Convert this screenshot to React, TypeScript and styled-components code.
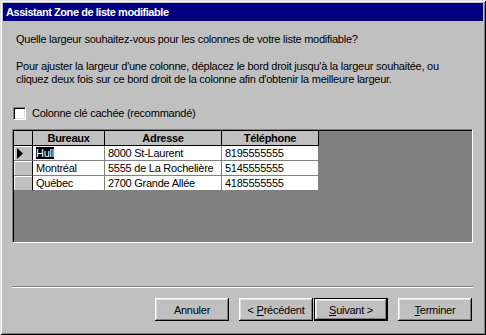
import React from 'react'
import styled, { createGlobalStyle } from 'styled-components'

const GlobalStyle = createGlobalStyle`
  html, body {
    margin: 0;
    padding: 0;
    background: #c0c0c0;
  }
  body {
    font-family: 'Liberation Sans', Arial, sans-serif;
    font-size: 11px;
    letter-spacing: -0.25px;
    color: #000;
  }
`

const Window = styled.div`
  width: 486px;
  height: 335px;
  box-sizing: border-box;
  padding: 3px;
  background: #c0c0c0;
  box-shadow: inset 1px 1px #dfdfdf, inset -1px -1px #000,
    inset 2px 2px #fff, inset -2px -2px #808080;
  display: flex;
  flex-direction: column;
`

const TitleBar = styled.div`
  height: 18px;
  line-height: 18px;
  background: #000080;
  color: #fff;
  font-weight: bold;
  font-size: 11px;
  letter-spacing: -0.45px;
  padding-left: 3px;
  white-space: nowrap;
`

const Body = styled.div`
  padding: 0 10px 0 9px;
  display: flex;
  flex-direction: column;
`

const Text = styled.p<{ $top: number }>`
  margin: ${(p) => p.$top}px 0 0 4px;
  line-height: 13px;
  white-space: nowrap;
`

const CheckRow = styled.label`
  margin: 21px 0 0 1px;
  display: flex;
  align-items: center;
  gap: 6px;
  height: 13px;
  line-height: 13px;
`

const CheckBox = styled.span`
  width: 13px;
  height: 13px;
  box-sizing: border-box;
  background: #fff;
  border: 1px solid;
  border-color: #808080 #fff #fff #808080;
  box-shadow: inset 1px 1px #000, inset -1px -1px #dfdfdf;
`

const GridBox = styled.div`
  margin-top: 9px;
  height: 114px;
  box-sizing: border-box;
  border: 1px solid;
  border-color: #808080 #fff #fff #808080;
  background: #808080;
  padding: 1px 0 0 1px;
  box-shadow: inset 1px 1px #000;
`

const Table = styled.table`
  border-collapse: separate;
  border-spacing: 0;
  table-layout: fixed;
  width: 305px;
`

const HeadCell = styled.th<{ $w: number }>`
  width: ${(p) => p.$w}px;
  height: 15px;
  box-sizing: border-box;
  padding: 0;
  background: #c0c0c0;
  border-right: 1px solid #000;
  border-bottom: 1px solid #000;
  font-weight: bold;
  letter-spacing: -0.3px;
  text-align: center;
  line-height: 14px;
  white-space: nowrap;
  overflow: hidden;
`

const SelectorCell = styled.td`
  height: 15px;
  box-sizing: border-box;
  padding: 0;
  background: #c0c0c0;
  border-right: 1px solid #000;
  border-bottom: 1px solid #808080;
  box-shadow: inset 1px 1px #fff;
  vertical-align: middle;
`

const Cell = styled.td`
  height: 15px;
  box-sizing: border-box;
  padding: 0 0 0 3px;
  background: #fff;
  border-right: 1px solid #808080;
  border-bottom: 1px solid #808080;
  line-height: 14px;
  white-space: nowrap;
  overflow: hidden;
`

const Selected = styled.span`
  background: #000;
  color: #fff;
`

const Arrow = styled.svg`
  display: block;
  margin-left: 3px;
`

const Separator = styled.div`
  margin-top: 43px;
  border-top: 1px solid #808080;
  border-bottom: 1px solid #fff;
`

const ButtonRow = styled.div`
  margin-top: 10px;
  display: flex;
  justify-content: flex-end;
  padding-right: 1px;
`

const Button = styled.button<{ $default?: boolean; $gap: number }>`
  width: 74px;
  height: 23px;
  margin-left: ${(p) => p.$gap}px;
  padding: 0;
  font-family: 'Liberation Sans', Arial, sans-serif;
  font-size: 11px;
  letter-spacing: -0.25px;
  color: #000;
  background: #c0c0c0;
  border: ${(p) => (p.$default ? '1px solid #000' : 'none')};
  box-shadow: inset -1px -1px #000, inset 1px 1px #fff,
    inset -2px -2px #808080, inset 2px 2px #dfdfdf;
`

const Key = styled.u`
  text-underline-offset: 1px;
`

const rows = [
  { office: 'Hull', address: '8000 St-Laurent', phone: '8195555555', current: true },
  { office: 'Montréal', address: '5555 de La Rochelière', phone: '5145555555' },
  { office: 'Québec', address: '2700 Grande Allée', phone: '4185555555' },
]

const App = () => (
  <>
    <GlobalStyle />
    <Window>
      <TitleBar>Assistant Zone de liste modifiable</TitleBar>
      <Body>
        <Text $top={12}>
          Quelle largeur souhaitez-vous pour les colonnes de votre liste modifiable?
        </Text>
        <Text $top={14}>
          Pour ajuster la largeur d'une colonne, déplacez le bord droit jusqu'à la largeur souhaitée, ou
          <br />
          cliquez deux fois sur ce bord droit de la colonne afin d'obtenir la meilleure largeur.
        </Text>
        <CheckRow>
          <CheckBox />
          Colonne clé cachée (recommandé)
        </CheckRow>
        <GridBox>
          <Table>
            <thead>
              <tr>
                <HeadCell $w={19} />
                <HeadCell $w={72}>Bureaux</HeadCell>
                <HeadCell $w={117}>Adresse</HeadCell>
                <HeadCell $w={97}>Téléphone</HeadCell>
              </tr>
            </thead>
            <tbody>
              {rows.map((r) => (
                <tr key={r.office}>
                  <SelectorCell>
                    {r.current && (
                      <Arrow width="7" height="11" viewBox="0 0 7 11">
                        <path d="M0 0 L6 5.5 L0 11 Z" fill="#000" />
                      </Arrow>
                    )}
                  </SelectorCell>
                  <Cell>{r.current ? <Selected>{r.office}</Selected> : r.office}</Cell>
                  <Cell>{r.address}</Cell>
                  <Cell>{r.phone}</Cell>
                </tr>
              ))}
            </tbody>
          </Table>
        </GridBox>
        <Separator />
        <ButtonRow>
          <Button $gap={0}>Annuler</Button>
          <Button $gap={10}>
            &lt; <Key>P</Key>récédent
          </Button>
          <Button $gap={1} $default>
            <Key>S</Key>uivant &gt;
          </Button>
          <Button $gap={10}>
            <Key>T</Key>erminer
          </Button>
        </ButtonRow>
      </Body>
    </Window>
  </>
)

export default App
